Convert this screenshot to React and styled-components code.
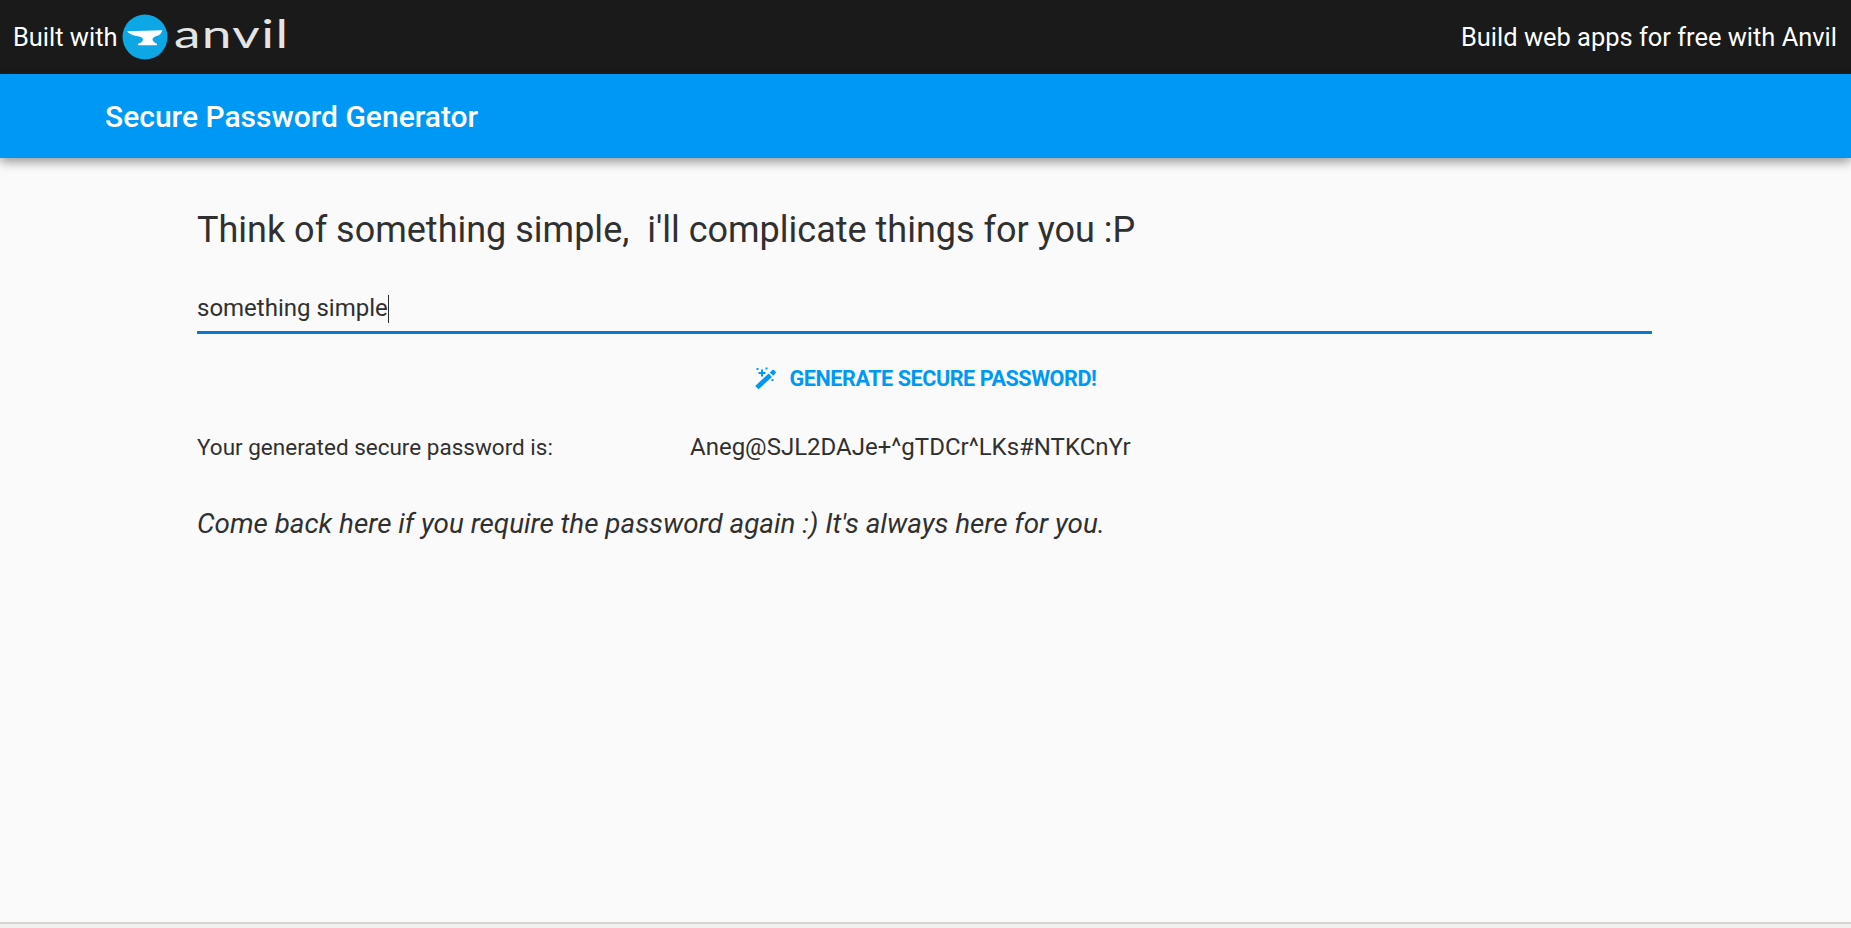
import React from 'react';
import styled, { createGlobalStyle } from 'styled-components';

const GlobalStyle = createGlobalStyle`
  html, body {
    margin: 0;
    padding: 0;
    height: 100%;
    background-color: #fafafa;
    font-family: Roboto, 'Noto Sans', sans-serif;
    color: #303030;
  }

  #root {
    height: 100%;
  }
`;

const Page = styled.div`
  height: 928px;
  display: flex;
  flex-direction: column;
  overflow: hidden;
`;

const BuiltBar = styled.div`
  flex: 0 0 74px;
  display: flex;
  align-items: center;
  justify-content: space-between;
  padding: 0 14px 0 13px;
  background-color: #1a1a1a;
  color: #fff;
  font-size: 25.45px;
`;

const Brand = styled.div`
  display: flex;
  align-items: center;
`;

const LogoMark = styled.svg`
  width: 46px;
  height: 46px;
  margin-left: 4px;
`;

const Wordmark = styled.span`
  margin: 0 0 9px 6px;
  font-family: Lato, sans-serif;
  font-weight: 400;
  font-size: 38px;
  line-height: 1;
  letter-spacing: 1px;
  color: #e4e4e4;
  display: inline-block;
  transform: scaleX(1.4);
  transform-origin: left center;
`;

const AppBar = styled.header`
  flex: 0 0 84px;
  display: flex;
  align-items: center;
  padding-left: 105px;
  background-color: #0098f5;
  color: #fff;
  font-size: 30px;
  font-weight: 500;
  box-shadow: 0 4px 10px rgba(0, 0, 0, 0.4);
  position: relative;
`;

const Content = styled.main`
  flex: 1 1 auto;
  padding: 49px 197px 0;
  width: 1455px;
`;

const Heading = styled.h1`
  margin: 0;
  font-size: 36px;
  line-height: 46px;
  font-weight: 400;
`;

const InputWrap = styled.div`
  position: relative;
  margin-top: 31px;
`;

const PasswordInput = styled.input`
  display: block;
  width: 100%;
  box-sizing: border-box;
  height: 50px;
  padding: 0;
  border: 0;
  border-bottom: 3px solid #0a78d2;
  background: transparent;
  outline: none;
  font-family: inherit;
  font-size: 24px;
  color: #303030;
`;

const Caret = styled.span`
  position: absolute;
  left: 191px;
  top: 11px;
  width: 1px;
  height: 28px;
  background-color: #2c2c2c;
`;

const ButtonRow = styled.div`
  display: flex;
  justify-content: center;
  margin-top: 20px;
`;

const GenerateButton = styled.button`
  display: flex;
  align-items: center;
  gap: 13px;
  padding: 0;
  height: 48px;
  border: 0;
  background: none;
  color: #0098f5;
  font-family: inherit;
  font-size: 21.6px;
  font-weight: 700;
  letter-spacing: -0.45px;
  text-transform: uppercase;
  cursor: pointer;
`;

const WandIcon = styled.svg`
  width: 24px;
  height: 24px;
  fill: currentColor;
`;

const ResultRow = styled.div`
  display: flex;
  align-items: center;
  margin-top: 30px;
  height: 30px;
  font-size: 22.5px;
`;

const ResultLabel = styled.span`
  flex: 0 0 493px;
`;

const ResultValue = styled.span`
  font-size: 24px;
`;

const Note = styled.p`
  margin: 44px 0 0;
  font-size: 27.8px;
  line-height: 36px;
  font-style: italic;
`;

const Footer = styled.div`
  flex: 0 0 6px;
  box-sizing: border-box;
  background-color: #f1f0ef;
  border-top: 2px solid #d6d5d4;
`;

const App = () => (
  <Page>
    <GlobalStyle />
    <BuiltBar>
      <Brand>
        Built with
        <LogoMark viewBox="0 0 46 46">
          <circle cx="23" cy="23" r="22.5" fill="#0ea7e6" />
          <path
            d="M5 17.2 L40.2 16.3 C39.5 19 38 21 35.5 21.8 C33 22.6 31 23.4 30.5 25 C30.3 27 32.5 29 35 29.8 L35 31.2 L16 31.2 L16 29.8 C19 29 21.2 27.2 21 25 C20.5 23.4 18 22.6 14.5 22 C10.5 21.2 7 19.8 5 17.2 Z"
            fill="#fff"
          />
        </LogoMark>
        <Wordmark>anvil</Wordmark>
      </Brand>
      <span>Build web apps for free with Anvil</span>
    </BuiltBar>
    <AppBar>Secure Password Generator</AppBar>
    <Content>
      <Heading>Think of something simple,&nbsp; i'll complicate things for you :P</Heading>
      <InputWrap>
        <PasswordInput defaultValue="something simple" />
        <Caret />
      </InputWrap>
      <ButtonRow>
        <GenerateButton>
          <WandIcon viewBox="0 0 24 24">
            <path d="M2.2 20 L15.6 7.6 L19 11 L5.6 23.2 Z" />
            <path d="M16.8 6.4 L19.2 4.2 C19.8 3.7 20.6 3.7 21.2 4.2 L22.4 5.4 C23 6 23 6.8 22.4 7.4 L20.2 9.8 Z" />
            <path d="M8 3.5 H10 V6 H12.5 V8 H10 V10.5 H8 V8 H5.5 V6 H8 Z" />
            <rect x="3.5" y="2" width="2" height="2" />
            <rect x="12.5" y="1.5" width="2" height="2" />
            <rect x="18.5" y="13" width="2" height="2" />
          </WandIcon>
          Generate secure password!
        </GenerateButton>
      </ButtonRow>
      <ResultRow>
        <ResultLabel>Your generated secure password is:</ResultLabel>
        <ResultValue>Aneg@SJL2DAJe+^gTDCr^LKs#NTKCnYr</ResultValue>
      </ResultRow>
      <Note>Come back here if you require the password again :) It's always here for you.</Note>
    </Content>
    <Footer />
  </Page>
);

export default App;
